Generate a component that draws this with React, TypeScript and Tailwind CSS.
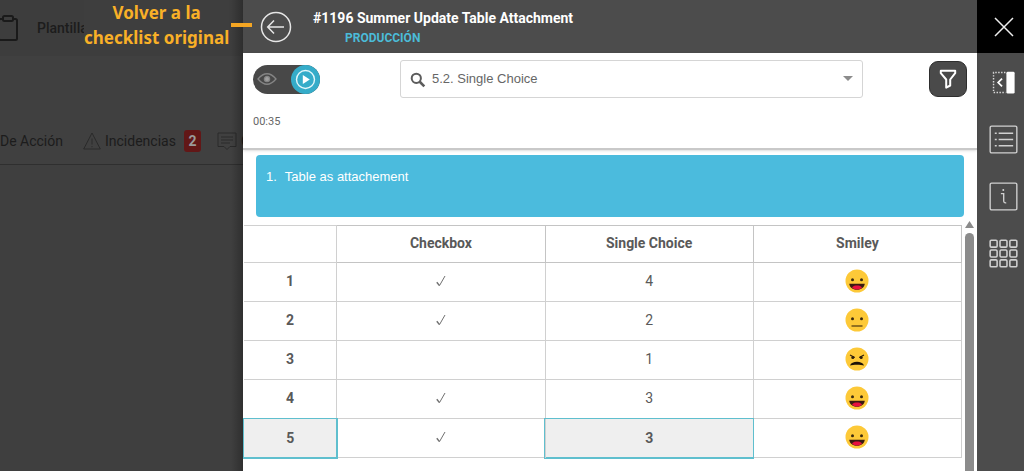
import React, { useState } from 'react';

type Mood = 'happy' | 'neutral' | 'angry';

const rows: { id: number; checked: boolean; choice: number; mood: Mood }[] = [
  { id: 1, checked: true, choice: 4, mood: 'happy' },
  { id: 2, checked: true, choice: 2, mood: 'neutral' },
  { id: 3, checked: false, choice: 1, mood: 'angry' },
  { id: 4, checked: true, choice: 3, mood: 'happy' },
  { id: 5, checked: true, choice: 3, mood: 'happy' },
];

function Smiley({ mood }: { mood: Mood }) {
  return (
    <svg viewBox="0 0 24 24" className="w-6 h-6 mx-auto" role="img" aria-label={mood}>
      <circle cx="12" cy="12" r="11.5" fill="#fdc938" />
      {mood === 'angry' ? (
        <>
          <path d="M5 8 L9.8 10.4 M19 8 L14.2 10.4" stroke="#2b1d0e" strokeWidth="1.1" />
          <circle cx="7.8" cy="10.5" r="1.5" fill="#2b1d0e" />
          <circle cx="16.2" cy="10.5" r="1.5" fill="#2b1d0e" />
          <path d="M5 18.600 C6.500 13.600 17.500 13.600 19 18.600 C16 17.600 8 17.600 5 18.600Z" fill="#1d1208" />
        </>
      ) : (
        <>
          <circle cx="7.5" cy="10.8" r="1.5" fill="#3a2a10" />
          <circle cx="16.5" cy="10.8" r="1.5" fill="#3a2a10" />
        </>
      )}
      {mood === 'neutral' && <path d="M6.500 18h11" stroke="#4a3512" strokeWidth="1.2" />}
      {mood === 'happy' && (
        <>
          <path d="M4.200 14.800h15.600c-.5 3.600-3.300 6-7.800 6s-7.300-2.400-7.800-6z" fill="#3a1a10" />
          <path d="M7 18.200c1.500-1.500 3-1.800 5-1.800s3.500.3 5 1.800c-1.300 1.800-3 2.400-5 2.400s-3.700-.6-5-2.400z" fill="#e8103f" />
        </>
      )}
    </svg>
  );
}

function Backdrop() {
  return (
    <div className="relative w-[243px] shrink-0 overflow-hidden bg-[#404040] text-[#1c1c1c]">
      <div className="flex h-14 items-center bg-[#3d3d3d]">
        <svg viewBox="0 0 20 26" className="w-5 h-[26px] shrink-0 -ml-0.5" fill="none" stroke="#1a1a1a" strokeWidth="2">
          <path d="M6 4H2.500Q1 4 1 5.500V23.500Q1 25 2.500 25H17.500Q19 25 19 23.500V5.500Q19 4 17.500 4H14" />
          <rect x="5" y="1" width="10" height="5" rx="1.500" />
        </svg>
        <span className="ml-[19px] text-sm font-medium">Plantilla</span>
      </div>
      <div className="mt-[72px] flex h-[37px] items-center whitespace-nowrap border-b border-[#2f2f2f] pb-[11px] text-sm">
        <span>De Acción</span>
        <svg viewBox="0 0 18 18" className="ml-5 w-[18px] h-[18px] shrink-0" fill="none" stroke="#2a2a2a" strokeWidth="1">
          <path d="M9 1 L17.300 17H.7z M9 6.500v6 M9 14v1.200" />
        </svg>
        <span className="ml-1">Incidencias</span>
        <span className="ml-2 flex h-[22px] w-[17px] shrink-0 items-center justify-center rounded-[3px] bg-[#621717] font-bold text-[#9a9a9a]">
          2
        </span>
        <svg viewBox="0 0 20 18" className="ml-4 w-5 h-[18px] shrink-0" fill="none" stroke="#2a2a2a" strokeWidth="1">
          <path d="M1 1h18v13.500h-6l-3 3-3-3H1z M4 5h12 M4 8h12 M4 11h9" />
        </svg>
        <span className="ml-1">C</span>
      </div>
      <div className="h-full bg-[#3f3f3f]" />
      <div className="absolute inset-y-0 right-0 w-3 bg-linear-to-r from-transparent to-black/25" />
    </div>
  );
}

function Callout() {
  return (
    <div className="absolute left-[84px] top-0 flex items-center">
      <p className="bg-[#3e3e3e] text-center font-['Noto_Sans','Open_Sans',sans-serif] text-[17px] leading-[25px] font-bold whitespace-nowrap text-[#f9b027]">
        Volver a la
        <br />
        checklist original
      </p>
      <span className="ml-0.5 h-1 w-[21px] bg-[#f5a623]" />
    </div>
  );
}

function Header() {
  return (
    <header className="flex h-[53px] items-center bg-[#4c4c4c] pl-[17px]">
      <button aria-label="Volver" className="shrink-0">
        <svg viewBox="0 0 32 32" className="w-8 h-8" fill="none" stroke="#e6e6e6" strokeWidth="1.500">
          <circle cx="16" cy="16" r="14.500" />
          <path d="M24 16H8 M14 9.500 L7.700 16 L14 22.500" />
        </svg>
      </button>
      <div className="ml-[21px] pt-0.5 font-bold">
        <h1 className="text-sm leading-5 text-white">#1196 Summer Update Table Attachment</h1>
        <p className="pl-8 text-xs leading-5 text-[#4bbbd8]">PRODUCCIÓN</p>
      </div>
    </header>
  );
}

function Toolbar() {
  const [running, setRunning] = useState(true);

  return (
    <div className="relative z-10 h-[97px] border-b-2 border-[#c9c9c9] px-2.5 pt-[7px] shadow-sm">
      <div className="flex items-center">
        <label className="flex h-[29px] w-[67px] shrink-0 cursor-pointer items-center justify-between rounded-full bg-[#484848] pl-1">
          <input
            type="checkbox"
            className="sr-only"
            aria-label="Ejecutar"
            checked={running}
            onChange={(e) => setRunning(e.target.checked)}
          />
          <svg viewBox="0 0 20 14" className="w-5 h-3.5" fill="none" stroke="#858585" strokeWidth="1.300">
            <path d="M1 7 Q10-3.500 19 7 Q10 17.500 1 7z" />
            <circle cx="10" cy="7" r="2.600" fill="#a0a0a0" />
          </svg>
          <svg viewBox="0 0 29 29" className="w-[29px] h-[29px]">
            <circle cx="14.500" cy="14.500" r="14.500" fill="#35acc9" />
            <circle cx="14.500" cy="14.500" r="9" fill="none" stroke="#e3f6fa" strokeWidth="1.400" />
            <path d="M11.800 10v9l7-4.500z" fill="#fff" />
          </svg>
        </label>
        <div className="relative ml-20 min-w-0 grow">
          <svg viewBox="0 0 16 16" className="pointer-events-none absolute left-2.5 top-3 w-4 h-4" fill="none" stroke="#5c5c5c">
            <circle cx="6.300" cy="6.300" r="4.600" strokeWidth="2" />
            <path d="M9.500 9.500l4.800 4.800" strokeWidth="2.600" />
          </svg>
          <select
            aria-label="Pregunta"
            className="h-[38px] w-full appearance-none rounded-[3px] border border-[#d5d5d5] bg-white pl-[31px] font-['Liberation_Sans',Arial,sans-serif] text-[13px] text-[#666]"
          >
            <option>5.2. Single Choice</option>
          </select>
          <svg viewBox="0 0 10 5" className="pointer-events-none absolute right-2.5 top-4 w-2.5 h-[5px]">
            <path d="M0 0h10L5 5z" fill="#8c8c8c" />
          </svg>
        </div>
        <button
          aria-label="Filtrar"
          className="ml-[66px] flex h-9 w-[38px] shrink-0 items-center justify-center rounded-[9px] border border-[#2e2e2e] bg-[#4a4a4a]"
        >
          <svg viewBox="0 0 18 20" className="w-[18px] h-5" fill="none" stroke="#fff" strokeWidth="2" strokeLinejoin="round">
            <path d="M1.800 1.800h14.400v2.400L11.200 10.500V16.500L7.200 18.600V10.500L1.800 4.200z" />
          </svg>
        </button>
      </div>
      <p className="mt-4 text-[11px] leading-4 text-[#666]">00:35</p>
    </div>
  );
}

function AnswersTable() {
  const base = 'border border-[#d0d0d0] p-0 pb-0.5';
  const active = 'relative border border-[#5fbfce] bg-[#efefef] p-0 font-bold outline-1 outline-offset-0 outline-[#5fbfce]';

  return (
    <table className="grow table-fixed border-collapse text-center text-sm text-[#595959]">
      <thead>
        <tr className="h-[37px]">
          <td className="w-[13%] border border-l-0 border-[#d0d0d0]" />
          {['Checkbox', 'Single Choice', 'Smiley'].map((name) => (
            <th key={name} className="w-[29%] border border-[#c4c4c4] p-0 pb-0.5 font-bold">
              {name}
            </th>
          ))}
        </tr>
      </thead>
      <tbody>
        {rows.map((row) => (
          <tr key={row.id} className="h-[39px]">
            <th className={row.id === 5 ? active : 'border border-l-0 border-[#d0d0d0] p-0 pb-0.5 font-bold'}>{row.id}</th>
            <td className={base}>
              {row.checked && (
                <svg viewBox="0 0 10 12" className="mx-auto w-2.5 h-3" fill="none" stroke="#707070" role="img" aria-label="Sí">
                  <path d="M.8 7.300 L3.500 10.600" strokeWidth="1.500" />
                  <path d="M3.500 10.600 L9 1" strokeWidth="1" />
                </svg>
              )}
            </td>
            <td className={row.id === 5 ? active : base}>{row.choice}</td>
            <td className={base}>
              <Smiley mood={row.mood} />
            </td>
          </tr>
        ))}
      </tbody>
    </table>
  );
}

function Rail() {
  return (
    <nav className="flex w-[47px] shrink-0 flex-col items-center bg-[#4c4c4c]">
      <button aria-label="Cerrar" className="flex h-[53px] w-full items-center justify-center bg-black pl-1.5">
        <svg viewBox="0 0 20 20" className="w-5 h-5" fill="none" stroke="#eee" strokeWidth="1.500">
          <path d="M1 1l18 18 M19 1L1 19" />
        </svg>
      </button>
      <div className="mt-[15px] flex flex-col items-center gap-7 pl-[5px]">
        <button aria-label="Contraer panel">
          <svg viewBox="0 0 30 30" className="w-[29px] h-[29px]" fill="none">
            <path d="M17 4.700H4.700V25.300H17" stroke="#d8d8d8" strokeWidth="1.500" strokeDasharray="1.500 1.500" />
            <path d="M13.500 11l-4 4 4 4" stroke="#fff" strokeWidth="1.800" />
            <rect x="18" y="4" width="8.500" height="22.500" rx="1.500" fill="#fff" />
          </svg>
        </button>
        <button aria-label="Lista">
          <svg viewBox="0 0 30 30" className="w-[29px] h-[29px]" fill="none" stroke="#d0d0d0" strokeWidth="1.400">
            <rect x="1.200" y="1.200" width="27.600" height="27.600" rx="1.500" />
            <path d="M6 8.500h2 M10 8.500h15 M6 15h2 M10 15h15 M6 21.500h2 M10 21.500h15" />
          </svg>
        </button>
        <button aria-label="Información">
          <svg viewBox="0 0 30 30" className="w-[29px] h-[29px]" fill="none" stroke="#d0d0d0" strokeWidth="1.400">
            <rect x="1.200" y="1.200" width="27.600" height="27.600" rx="1.500" />
            <path d="M12.300 12h2.900v7.500q0 2.500 2.600 2" />
            <circle cx="14.800" cy="8.300" r="1" fill="#d8d8d8" stroke="none" />
          </svg>
        </button>
        <button aria-label="Módulos">
          <svg viewBox="0 0 30 30" className="w-[29px] h-[29px]" fill="none" stroke="#d0d0d0" strokeWidth="1.600">
            {[1.2, 11.4, 21.6].map((y) =>
              [1.2, 11.4, 21.6].map((x) => <rect key={`${x}-${y}`} x={x} y={y} width="7.200" height="7.200" rx="1.200" />)
            )}
          </svg>
        </button>
      </div>
    </nav>
  );
}

export default function App() {
  return (
    <div className="relative flex h-screen overflow-hidden font-[Roboto,sans-serif]">
      <Backdrop />
      <main className="flex min-w-0 grow flex-col bg-white">
        <Header />
        <Toolbar />
        <h2 className="mx-[13px] mt-[5px] h-[62px] shrink-0 rounded bg-[#4bbbdd] px-2.5 pt-3 font-['Liberation_Sans',Arial,sans-serif] text-[13px] leading-5 text-white">
          1.<span className="ml-2">Table as attachement</span>
        </h2>
        <div className="mt-2 flex grow items-start">
          <AnswersTable />
          <div className="flex w-[15px] shrink-0 flex-col items-center self-stretch">
            <svg viewBox="0 0 9 7" className="-mt-1 w-[9px] h-[7px] shrink-0">
              <path d="M0 7h9L4.500 0z" fill="#8b8b8b" />
            </svg>
            <div className="mt-[5px] w-[9px] grow rounded-t-full bg-[#8b8b8b]" />
          </div>
        </div>
      </main>
      <Rail />
      <Callout />
    </div>
  );
}
